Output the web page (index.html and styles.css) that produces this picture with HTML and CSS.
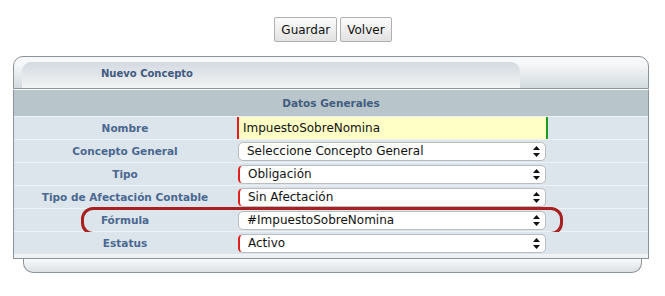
FILE: index.html
```html
<!DOCTYPE html>
<html lang="es">
<head>
    <meta charset="UTF-8">
    <title>Nuevo Concepto</title>
    <link rel="stylesheet" href="styles.css">
</head>
<body>
    <div class="actions">
        <button type="button">Guardar</button>
        <button type="button">Volver</button>
    </div>
    <div class="panel">
        <div class="panel-head">
            <div class="tab">Nuevo Concepto</div>
        </div>
        <div class="panel-body">
            <div class="section-title">Datos Generales</div>
            <div class="row">
                <label class="label">Nombre</label>
                <div class="field"><input class="text required valid" type="text" value="ImpuestoSobreNomina"></div>
            </div>
            <div class="row">
                <label class="label">Concepto General</label>
                <div class="field"><span class="select">Seleccione Concepto General<svg class="arrows" width="7" height="11" viewBox="0 0 7 11"><path d="M3.5 0L7 4H0z M3.5 11L0 7h7z" fill="#111"/></svg></span></div>
            </div>
            <div class="row">
                <label class="label">Tipo</label>
                <div class="field"><span class="select required">Obligación<svg class="arrows" width="7" height="11" viewBox="0 0 7 11"><path d="M3.5 0L7 4H0z M3.5 11L0 7h7z" fill="#111"/></svg></span></div>
            </div>
            <div class="row">
                <label class="label">Tipo de Afectación Contable</label>
                <div class="field"><span class="select required">Sin Afectación<svg class="arrows" width="7" height="11" viewBox="0 0 7 11"><path d="M3.5 0L7 4H0z M3.5 11L0 7h7z" fill="#111"/></svg></span></div>
            </div>
            <div class="row">
                <label class="label">Fórmula</label>
                <div class="field"><span class="select">#ImpuestoSobreNomina<svg class="arrows" width="7" height="11" viewBox="0 0 7 11"><path d="M3.5 0L7 4H0z M3.5 11L0 7h7z" fill="#111"/></svg></span></div>
                <div class="highlight"></div>
            </div>
            <div class="row">
                <label class="label">Estatus</label>
                <div class="field"><span class="select required">Activo<svg class="arrows" width="7" height="11" viewBox="0 0 7 11"><path d="M3.5 0L7 4H0z M3.5 11L0 7h7z" fill="#111"/></svg></span></div>
            </div>
        </div>
        <div class="panel-foot"></div>
    </div>
</body>
</html>
```

FILE: styles.css
```css
body {
    margin: 0;
    font-family: "DejaVu Sans", Verdana, sans-serif;
    background: white;
}
.actions {
    padding-top: 17px;
    display: flex;
    justify-content: center;
    gap: 3px;
    padding-left: 1px;
}
button {
    font-family: "DejaVu Sans", sans-serif;
    font-size: 12px;
    height: 25px;
    padding: 0 6px;
    color: #111;
    background: linear-gradient(#fbfbfb, #e2e2e2);
    border: 1px solid #b0b0b0;
    border-radius: 2px;
}
.panel {
    width: 636px;
    margin: 14px 0 0 13px;
}
.panel-head {
    height: 31px;
    border: 1px solid #8d9499;
    border-bottom: 1px solid #8d9499;
    border-radius: 10px 10px 0 0;
    background: linear-gradient(#f7f8f9 20%, #d3dbe0);
    display: flex;
    align-items: flex-end;
    padding-left: 8px;
}
.tab {
    width: 419px;
    height: 26px;
    padding-left: 79px;
    border-radius: 9px 9px 0 0;
    background: linear-gradient(#d3dae0, #f2f4f5);
    color: #3f5a80;
    font-size: 10px;
    font-weight: bold;
    line-height: 24px;
}
.panel-body {
    border-left: 1px solid #8d9499;
    border-right: 1px solid #8d9499;
    border-bottom: 1px solid #8d9499;
    border-top: 1px solid #ffffff;
    background: #eef2f5;
    padding-bottom: 3px;
}
.section-title {
    height: 26px;
    background: #b8c5ca;
    color: #435d80;
    font-size: 10.5px;
    font-weight: bold;
    text-align: center;
    line-height: 26px;
    margin-bottom: 1px;
}
.row {
    position: relative;
    display: grid;
    grid-template-columns: 222px 1fr;
    height: 22px;
    background: #dde5ec;
    margin-bottom: 1px;
}
.label {
    color: #4a6891;
    font-size: 10.5px;
    font-weight: bold;
    text-align: center;
    line-height: 22px;
}
.field {
    display: flex;
    align-items: center;
}
.text {
    box-sizing: border-box;
    width: 311px;
    height: 22px;
    margin: 0 0 0 1px;
    padding: 0 4px;
    border: none;
    background: #ffffc6;
    font-family: "DejaVu Sans", sans-serif;
    font-size: 12px;
    color: #111;
}
.required {
    border-left: 2px solid #e0201a !important;
}
.valid {
    border-right: 2px solid #1f9a24;
}
.select {
    position: relative;
    box-sizing: border-box;
    width: 308px;
    height: 19px;
    margin-left: 2px;
    padding-left: 8px;
    background: white;
    border: 1px solid #b9bcc0;
    border-radius: 5px;
    font-size: 12px;
    line-height: 17px;
    color: #111;
}
.arrows {
    position: absolute;
    right: 5px;
    top: 3px;
}
.highlight {
    position: absolute;
    left: 67px;
    top: -2px;
    width: 476px;
    height: 22px;
    border: 3px solid #a8201f;
    border-radius: 12px;
}
.panel-foot {
    height: 13px;
    margin: 0 7px 0 10px;
    border: 1px solid #8d9499;
    border-top: none;
    border-radius: 0 0 10px 10px;
    background: linear-gradient(#f9fafb, #dae0e4);
}
```
